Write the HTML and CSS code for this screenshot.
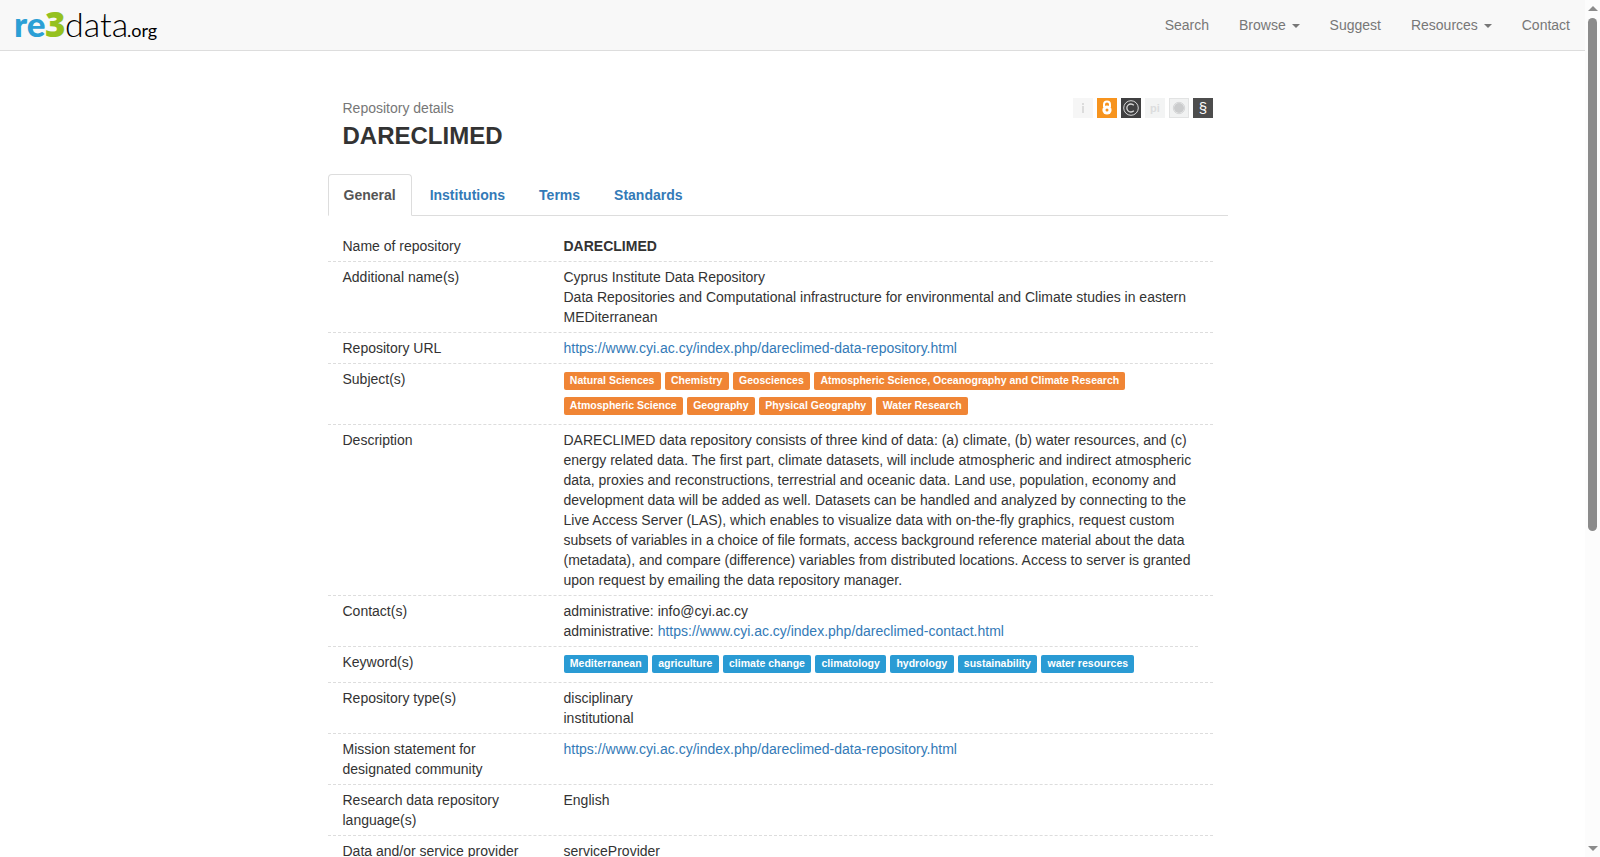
FILE: index.html
```html
<!DOCTYPE html>
<html lang="en">
<head>
    <meta charset="UTF-8">
    <meta name="viewport" content="width=device-width, initial-scale=1.0">
    <title>DARECLIMED | re3data.org</title>
    <link rel="stylesheet" href="styles.css">
</head>
<body>
<header class="navbar">
    <a class="brand" href="#" aria-label="re3data.org">
        <svg width="146" height="40" viewBox="0 0 146 40">
            <text class="logo-re" x="-1" y="32">re</text>
            <text class="logo-3" x="30" y="32">3</text>
            <text class="logo-data" x="50" y="32">data</text>
            <text class="logo-org" x="112" y="32">.org</text>
        </svg>
    </a>
    <nav class="menu">
        <a href="#">Search</a>
        <a href="#">Browse <span class="caret"></span></a>
        <a href="#">Suggest</a>
        <a href="#">Resources <span class="caret"></span></a>
        <a href="#">Contact</a>
    </nav>
</header>

<main class="container">
    <div class="heading">
        <div>
            <p class="kicker">Repository details</p>
            <h1>DARECLIMED</h1>
        </div>
        <div class="badges">
            <svg width="20" height="20" viewBox="0 0 20 20">
                <rect width="20" height="20" fill="#f6f6f6"/>
                <path d="M10 8v7M10 5v2" stroke="#dcdcdc" stroke-width="2"/>
            </svg>
            <svg width="20" height="20" viewBox="0 0 20 20">
                <rect width="20" height="20" fill="#f7941e"/>
                <path d="M7 9V6.500a3 3 0 0 1 6 0V9" fill="none" stroke="#fff" stroke-width="2"/>
                <circle cx="10" cy="12" r="4.600" fill="#fff"/>
                <circle cx="10" cy="12" r="1.500" fill="#f7941e"/>
            </svg>
            <svg width="20" height="20" viewBox="0 0 20 20">
                <rect width="20" height="20" fill="#404041"/>
                <circle cx="10" cy="10" r="7.300" fill="none" stroke="#d8d8d8"/>
                <path d="M12.800 7.300a4 4 0 1 0 0 5.400" fill="none" stroke="#d8d8d8" stroke-width="1.300"/>
            </svg>
            <svg width="20" height="20" viewBox="0 0 20 20">
                <rect width="20" height="20" fill="#f3f4f4"/>
                <text class="badge-pi" x="10" y="14">pi</text>
            </svg>
            <svg width="20" height="20" viewBox="0 0 20 20">
                <rect x=".5" y=".5" width="19" height="19" fill="#f1f2f2" stroke="#e2e3e3"/>
                <circle cx="10" cy="10" r="5" fill="#cbcccd"/>
                <circle cx="10" cy="10" r="5.700" fill="none" stroke="#d6d7d8"/>
            </svg>
            <svg width="20" height="20" viewBox="0 0 20 20">
                <rect width="20" height="20" fill="#4d4d4d"/>
                <text class="badge-par" x="10" y="15">§</text>
            </svg>
        </div>
    </div>

    <nav class="tabs">
        <a class="active" href="#general">General</a>
        <a href="#institutions">Institutions</a>
        <a href="#terms">Terms</a>
        <a href="#standards">Standards</a>
    </nav>

    <dl class="details" id="general">
        <div class="row">
            <dt>Name of repository</dt>
            <dd><strong>DARECLIMED</strong></dd>
        </div>
        <div class="row">
            <dt>Additional name(s)</dt>
            <dd>Cyprus Institute Data Repository<br>Data Repositories and Computational infrastructure for environmental and Climate studies in eastern MEDiterranean</dd>
        </div>
        <div class="row">
            <dt>Repository URL</dt>
            <dd><a href="#">https://www.cyi.ac.cy/index.php/dareclimed-data-repository.html</a></dd>
        </div>
        <div class="row">
            <dt>Subject(s)</dt>
            <dd class="labels subjects">
                <span>Natural Sciences</span>
                <span>Chemistry</span>
                <span>Geosciences</span>
                <span>Atmospheric Science, Oceanography and Climate Research</span>
                <span>Atmospheric Science</span>
                <span>Geography</span>
                <span>Physical Geography</span>
                <span>Water Research</span>
            </dd>
        </div>
        <div class="row">
            <dt>Description</dt>
            <dd>DARECLIMED data repository consists of three kind of data: (a) climate, (b) water resources, and (c) energy related data. The first part, climate datasets, will include atmospheric and indirect atmospheric data, proxies and reconstructions, terrestrial and oceanic data. Land use, population, economy and development data will be added as well. Datasets can be handled and analyzed by connecting to the Live Access Server (LAS), which enables to visualize data with on-the-fly graphics, request custom subsets of variables in a choice of file formats, access background reference material about the data (metadata), and compare (difference) variables from distributed locations. Access to server is granted upon request by emailing the data repository manager.</dd>
        </div>
        <div class="row contacts">
            <dt>Contact(s)</dt>
            <dd>administrative: info@cyi.ac.cy<br>administrative: <a href="#">https://www.cyi.ac.cy/index.php/dareclimed-contact.html</a></dd>
        </div>
        <div class="row">
            <dt>Keyword(s)</dt>
            <dd class="labels keywords">
                <span>Mediterranean</span>
                <span>agriculture</span>
                <span>climate change</span>
                <span>climatology</span>
                <span>hydrology</span>
                <span>sustainability</span>
                <span>water resources</span>
            </dd>
        </div>
        <div class="row">
            <dt>Repository type(s)</dt>
            <dd>disciplinary<br>institutional</dd>
        </div>
        <div class="row">
            <dt>Mission statement for designated community</dt>
            <dd><a href="#">https://www.cyi.ac.cy/index.php/dareclimed-data-repository.html</a></dd>
        </div>
        <div class="row">
            <dt>Research data repository language(s)</dt>
            <dd>English</dd>
        </div>
        <div class="row">
            <dt>Data and/or service provider</dt>
            <dd>serviceProvider</dd>
        </div>
    </dl>
</main>

<div class="scrollbar" aria-hidden="true">
    <span class="arrow up"></span>
    <span class="track"><span class="thumb"></span></span>
    <span class="arrow down"></span>
</div>
</body>
</html>
```
FILE: styles.css
```css
* {
    box-sizing: border-box;
}

body {
    margin: 0;
    padding-right: 15px;
    height: 100vh;
    overflow: hidden;
    font-family: "Liberation Sans", Arial, sans-serif;
    font-size: 14px;
    line-height: 20px;
    color: #333;
    background-color: #fff;
}

a {
    color: #337ab7;
    text-decoration: none;
}

/* Top bar */
.navbar {
    display: flex;
    justify-content: space-between;
    height: 51px;
    background-color: #f8f8f8;
    border-bottom: 1px solid #ddd;
}

.brand {
    padding: 5px 15px;
}

.brand svg {
    display: block;
    overflow: visible;
}

.logo-re, .logo-3, .logo-data, .logo-org {
    font-family: Lato, sans-serif;
    font-size: 35px;
}

.logo-re {
    font-weight: 900;
    fill: #2b9fd5;
}

.logo-3 {
    font-family: "Open Sans", sans-serif;
    font-weight: 800;
    fill: #95c11f;
}

.logo-data {
    font-size: 34px;
    font-weight: 300;
}

.logo-org {
    font-size: 18px;
}

.menu {
    display: flex;
}

.menu a {
    padding: 15px;
    color: #777;
}

.caret {
    display: inline-block;
    margin-left: 2px;
    vertical-align: middle;
    border-top: 4px solid;
    border-right: 4px solid transparent;
    border-left: 4px solid transparent;
}

/* Page column */
.container {
    width: 900px;
    max-width: 100%;
    margin: 0 auto;
}

.heading, .tabs, .details {
    margin: 0 15px 0 -15px;
}

.heading {
    display: flex;
    justify-content: space-between;
    padding: 47px 15px 25px;
}

.kicker {
    margin: 0;
    color: #777;
}

h1 {
    margin: 5px 0 0;
    font-size: 24px;
    line-height: 26px;
}

.badges {
    display: flex;
    gap: 4px;
}

.badges svg {
    overflow: visible;
}

.badge-pi, .badge-par {
    text-anchor: middle;
    font-size: 11px;
    font-weight: bold;
    fill: #dcddde;
}

.badge-par {
    font-size: 15px;
    font-weight: normal;
    fill: #fff;
}

/* Tabs */
.tabs {
    display: flex;
    gap: 2px;
    border-bottom: 1px solid #ddd;
}

.tabs a {
    margin-bottom: -1px;
    padding: 10px 15px;
    border: 1px solid transparent;
    border-radius: 4px 4px 0 0;
    font-weight: bold;
}

.tabs .active {
    color: #555;
    background-color: #fff;
    border-color: #ddd;
    border-bottom-color: transparent;
}

/* Details */
.details {
    padding: 15px 15px 0 0;
}

.row {
    display: grid;
    grid-template-columns: 221px 1fr;
    border-bottom: 1px dashed #ddd;
}

.row dt, .row dd {
    margin: 0;
    padding: 5px 15px;
}

.contacts {
    margin-right: 15px;
}

.contacts dd {
    padding-right: 0;
}

.row .labels {
    display: flex;
    flex-wrap: wrap;
    gap: 7px 4px;
    padding-top: 8px;
    padding-bottom: 9px;
}

.labels span {
    height: 18px;
    padding: 0 .6em;
    border-radius: 2px;
    font-size: 75%;
    font-weight: bold;
    line-height: 17px;
    color: #fff;
}

.subjects span {
    background-color: #f08535;
}

.keywords span {
    background-color: #2a9bd4;
}

/* Scrollbar */
.scrollbar {
    position: fixed;
    top: 0;
    right: 0;
    bottom: 0;
    display: flex;
    flex-direction: column;
    align-items: center;
    width: 15px;
    padding: 6px 0;
    background-color: #fcfcfc;
}

.arrow {
    border: 5px solid transparent;
}

.up {
    border-top: 0;
    border-bottom-color: #8b8b8b;
}

.down {
    border-bottom: 0;
    border-top-color: #8b8b8b;
}

.track {
    flex: 1;
    width: 9px;
    padding: 7px 0;
}

.thumb {
    display: block;
    height: 62.5%;
    border-radius: 5px;
    background-color: #8b8b8b;
}
```
